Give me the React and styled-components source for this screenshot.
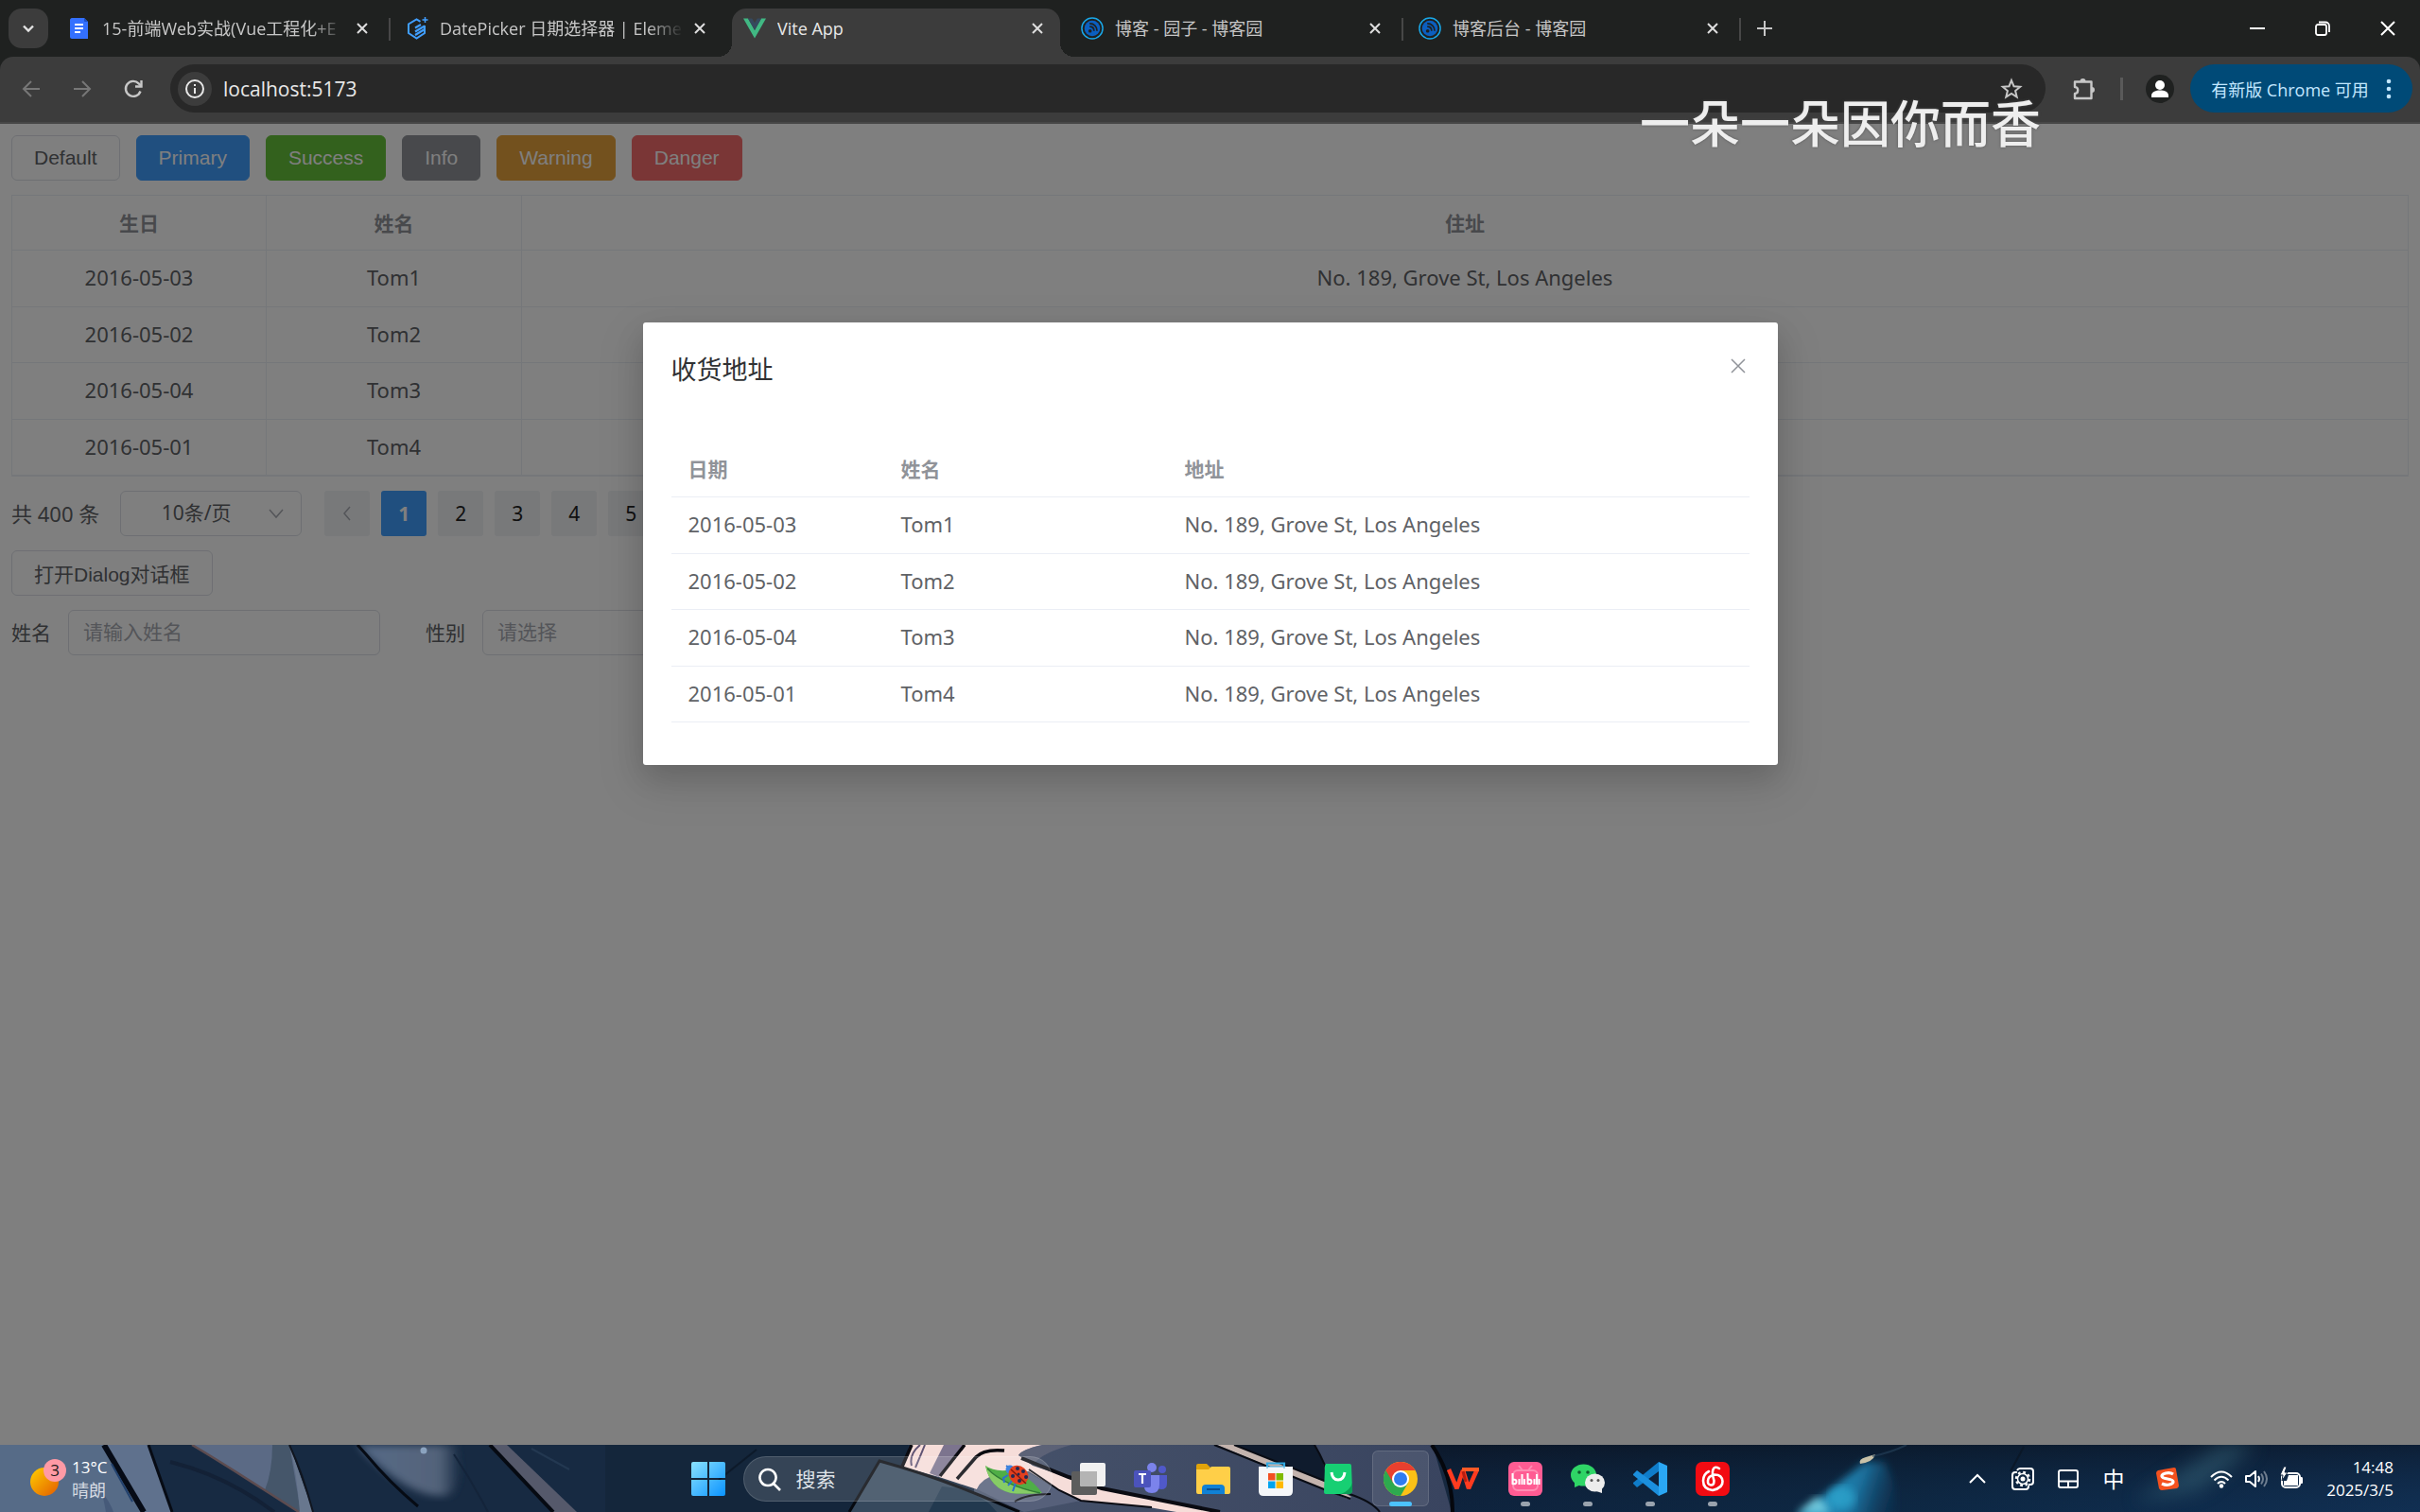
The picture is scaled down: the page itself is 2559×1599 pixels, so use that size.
import React from 'react';
import styled, { createGlobalStyle, css } from 'styled-components';

const uiFont = '"Open Sans", "Noto Sans CJK SC", sans-serif';
const pageFont = '"Noto Sans", "Noto Sans CJK SC", sans-serif';
const buttonFont = '"Liberation Sans", "Noto Sans CJK SC", sans-serif';

const GlobalStyle = createGlobalStyle`
  *, *::before, *::after { box-sizing: border-box; }
  html, body, #root { height: 100%; }
  body { margin: 0; overflow: hidden; background: #1f2120; font-family: ${uiFont}; }
  button, input, select { margin: 0; font: inherit; }
  button { cursor: pointer; }
  svg { display: block; flex: none; }
`;

const Screen = styled.div`
  position: relative;
  display: flex;
  flex-direction: column;
  min-height: 100vh;
`;

/* ---------- browser chrome ---------- */

const TabStrip = styled.header`
  display: flex;
  height: 60px;
  padding-left: 9px;
  background: #1f2120;
  color: #c7c7c7;
`;

const PlainButton = styled.button`
  display: flex;
  align-items: center;
  justify-content: center;
  padding: 0;
  border: 0;
  background: transparent;
  color: inherit;
`;

const TabSearch = styled(PlainButton)`
  width: 42px;
  height: 42px;
  margin: 9px 5px 0 0;
  border-radius: 14px;
  background: #3c3c3c;
  color: #e3e3e3;
`;

const TabList = styled.nav`
  display: flex;
  flex: 0 1 1785px;
  min-width: 0;
`;

const Tab = styled.div`
  position: relative;
  display: flex;
  align-items: center;
  flex: 1 1 0;
  min-width: 0;
  height: 60px;
  padding: 0 16px;
  border-right: 2px solid transparent;
  ${(p) => p.$divided && css`
    border-image: linear-gradient(transparent 19px, #474747 19px, #474747 43px, transparent 43px) 1;
  `}
  ${(p) => p.$active && css`
    z-index: 1;
    color: #e8e8e8;
    &::before {
      content: '';
      position: absolute;
      z-index: -1;
      inset: 9px 4px 0;
      border-radius: 15px 15px 0 0;
      background: #3c3c3c;
    }
    &::after {
      content: '';
      position: absolute;
      z-index: -1;
      inset: 45px -11px 0;
      background:
        radial-gradient(circle at 0 0, transparent 15px, #3c3c3c 15px) left / 15px 15px no-repeat,
        radial-gradient(circle at 100% 0, transparent 15px, #3c3c3c 15px) right / 15px 15px no-repeat;
    }
  `}
`;

const TabTitle = styled.a`
  flex: 1;
  min-width: 0;
  margin: 0 1px 0 12px;
  overflow: hidden;
  color: inherit;
  font-size: 18px;
  line-height: 26px;
  text-decoration: none;
  white-space: nowrap;
  ${(p) => p.$fade && css`
    mask-image: linear-gradient(90deg, #000 calc(100% - 42px), transparent calc(100% - 4px));
  `}
`;

const TabClose = styled(PlainButton)`
  width: 24px;
  height: 24px;
  color: #dedede;
`;

const NewTab = styled(PlainButton)`
  width: 50px;
  height: 60px;
`;

const WindowControls = styled.div`
  display: flex;
  margin-left: auto;
  color: #fff;
`;

const WindowButton = styled(PlainButton)`
  width: 69px;
  height: 60px;
`;

const ToolbarBack = styled.div`
  background: #1f2120;
`;

const Toolbar = styled.div`
  display: flex;
  align-items: center;
  height: 71px;
  padding: 0 8px 2px 6px;
  border-bottom: 2px solid #474747;
  border-radius: 14px 14px 0 0;
  background: #3c3c3c;
  color: #c7c7c7;
`;

const ToolButton = styled(PlainButton)`
  width: 54px;
  height: 48px;
  color: ${(p) => (p.disabled ? '#777' : '#c7c7c7')};
`;

const Omnibox = styled.form`
  display: flex;
  align-items: center;
  flex: 1;
  height: 51px;
  margin: 0 13px 0 12px;
  padding: 0 24px 0 8px;
  border-radius: 26px;
  background: #282828;
`;

const SiteInfo = styled(PlainButton)`
  width: 36px;
  height: 36px;
  border-radius: 50%;
  background: #3c3c3c;
  color: #e8e8e8;
`;

const AddressInput = styled.input`
  flex: 1;
  min-width: 0;
  padding: 0 12px;
  border: 0;
  outline: 0;
  background: transparent;
  color: #e8e8e8;
  font-size: 21px;
`;

const BarDivider = styled.span`
  width: 3px;
  height: 24px;
  margin: 0 12px;
  background: #5a5a5a;
`;

const UpdateButton = styled(PlainButton)`
  gap: 18px;
  width: 235px;
  height: 51px;
  margin-left: 5px;
  border-radius: 26px;
  background: #004a77;
  color: #c2e7ff;
  font-size: 18px;
`;

/* ---------- page ---------- */

const Viewport = styled.main`
  position: relative;
  flex: 1;
  padding: 12px;
  background: #fff;
  color: #606266;
  font-family: ${pageFont};
`;

const ButtonRow = styled.div`
  display: flex;
  gap: 17px;
  margin-bottom: 15px;
`;

const tones = {
  plain: ['#fff', '#606266', '#dcdfe6'],
  primary: ['#409eff', '#fff', '#409eff'],
  success: ['#67c23a', '#fff', '#67c23a'],
  info: ['#909399', '#fff', '#909399'],
  warning: ['#e6a23c', '#fff', '#e6a23c'],
  danger: ['#f56c6c', '#fff', '#f56c6c'],
};

const Button = styled.button`
  height: 48px;
  padding: 0 23px;
  border: 1px solid ${(p) => tones[p.$tone][2]};
  border-radius: 6px;
  background: ${(p) => tones[p.$tone][0]};
  color: ${(p) => tones[p.$tone][1]};
  font-family: ${buttonFont};
  font-size: 21px;
`;

const DataTable = styled.table`
  width: 100%;
  table-layout: fixed;
  border-collapse: separate;
  border-spacing: 0;
  font-size: 22px;
  line-height: 34px;
  text-align: ${(p) => (p.$bordered ? 'center' : 'left')};

  th, td {
    height: 60px;
    padding: 0 18px;
    border-bottom: 1px solid #ebeef5;
  }
  td { padding-bottom: 3px; }
  th {
    color: #909399;
    font-size: 21px;
    font-weight: 700;
  }
  tbody tr:nth-child(even) td { height: 59px; }

  ${(p) => p.$bordered && css`
    border: 1px solid #ebeef5;
    th + th, td + td { border-left: 1px solid #ebeef5; }
    th { height: 58px; }
  `}
`;

const Col = styled.col`
  width: ${(p) => p.$width}px;
`;

const Pager = styled.div`
  display: flex;
  align-items: center;
  gap: 12px;
  margin: 15px 0;
  font-size: 21px;
`;

const PagerTotal = styled.span`
  margin-right: 10px;
  padding-bottom: 2px;
  font-size: 22px;
`;

const SelectWrap = styled.span`
  position: relative;
  display: flex;
  align-items: center;
  width: ${(p) => p.$width}px;
  color: #a8abb2;
`;

const SelectArrow = styled.span`
  position: absolute;
  right: 18px;
  pointer-events: none;
`;

const fieldBox = css`
  width: 100%;
  height: 48px;
  border: 1px solid #dcdfe6;
  border-radius: 6px;
  background: #fff;
  font-size: 21px;
`;

const Select = styled.select`
  ${fieldBox}
  appearance: none;
  padding: 0 46px 2px 15px;
  color: ${(p) => (p.$centered ? '#606266' : '#a8abb2')};
  text-align-last: ${(p) => (p.$centered ? 'center' : 'left')};
`;

const TextInput = styled.input`
  ${fieldBox}
  width: 330px;
  padding: 0 15px 2px;
  color: #606266;
  &::placeholder { color: #a8abb2; opacity: 1; }
`;

const PageButton = styled.button`
  display: flex;
  align-items: center;
  justify-content: center;
  width: 48px;
  height: 48px;
  padding: 0;
  border: 0;
  border-radius: 3px;
  background: ${(p) => (p.$current ? '#409eff' : '#f0f2f5')};
  color: ${(p) => (p.$current ? '#fff' : p.disabled ? '#a8abb2' : '#222')};
  font-weight: ${(p) => (p.$current ? 700 : 400)};
`;

const PagerPrev = styled(PageButton)`
  margin-left: 12px;
`;

const FilterForm = styled.form`
  display: flex;
  gap: 48px;
  margin-top: 15px;
  font-size: 21px;
`;

const Field = styled.div`
  display: flex;
  align-items: center;
  gap: 18px;
  label { padding-bottom: 2px; }
`;

const Overlay = styled.div`
  position: absolute;
  inset: 0;
  padding-top: 210px;
  background: rgba(0, 0, 0, 0.5);
`;

const Dialog = styled.section`
  width: 1200px;
  max-width: 100%;
  margin: 0 auto;
  border-radius: 3px;
  background: #fff;
  box-shadow: 0 18px 48px 6px rgba(0, 0, 0, 0.1), 0 12px 30px rgba(0, 0, 0, 0.12);
`;

const DialogHeader = styled.div`
  display: flex;
  align-items: flex-start;
  justify-content: space-between;
  padding: 30px 30px 10px;
`;

const DialogTitle = styled.h2`
  margin: 0;
  color: #303133;
  font-size: 27px;
  font-weight: 400;
  line-height: 40px;
`;

const DialogClose = styled(PlainButton)`
  width: 24px;
  height: 32px;
  color: #909399;
`;

const DialogBody = styled.div`
  padding: 45px 30px;
`;

/* ---------- lyric caption over the desktop ---------- */

const Lyric = styled.div`
  position: absolute;
  z-index: 5;
  top: 90px;
  right: 401px;
  color: #eee;
  font-family: "Noto Sans CJK SC", sans-serif;
  font-size: 53px;
  font-weight: 500;
  line-height: 76px;
  text-shadow: 0 0 3px #555;
  white-space: nowrap;
`;

/* ---------- taskbar ---------- */

const Taskbar = styled.footer`
  position: relative;
  display: grid;
  grid-template-columns: 1fr auto 1fr;
  align-items: center;
  height: 71px;
  overflow: hidden;
  background: #16283f;
  color: #fff;
  font-size: 18px;
  line-height: 24px;
`;

const Wallpaper = styled.svg`
  position: absolute;
  inset: 0;
  width: 100%;
  height: 100%;
`;

const Weather = styled.div`
  position: relative;
  display: flex;
  align-items: center;
  gap: 6px;
  padding-left: 30px;
`;

const WeatherText = styled.div`
  font-size: 17px;
  span { display: block; }
  span + span { color: #d5dae2; font-size: 18px; }
`;

const Apps = styled.div`
  position: relative;
  display: flex;
  align-items: center;
`;

const AppSlot = styled(PlainButton)`
  position: relative;
  width: 66px;
  height: 71px;
  ${(p) => p.$focused && css`
    &::before {
      content: '';
      position: absolute;
      inset: 6px 3px;
      border: 1px solid rgba(255, 255, 255, 0.12);
      border-radius: 6px;
      background: rgba(255, 255, 255, 0.09);
    }
  `}
  ${(p) => p.$running && css`
    &::after {
      content: '';
      position: absolute;
      bottom: 6px;
      width: ${p.$focused ? 24 : 10}px;
      height: 5px;
      border-radius: 3px;
      background: ${p.$focused ? '#4cc2ff' : '#9aa3ae'};
    }
  `}
  svg { position: relative; }
`;

const SearchBox = styled.label`
  display: flex;
  align-items: center;
  width: 327px;
  height: 48px;
  margin: 0 5px 0 4px;
  padding: 0 10px 0 14px;
  border: 1px solid rgba(255, 255, 255, 0.14);
  border-radius: 24px;
  background: rgba(255, 255, 255, 0.14);
`;

const SearchInput = styled.input`
  flex: 1;
  min-width: 0;
  padding: 0 0 0 15px;
  border: 0;
  outline: 0;
  background: transparent;
  color: #fff;
  font-size: 21px;
  &::placeholder { color: #dfe3e8; opacity: 1; }
`;

const Tray = styled.div`
  position: relative;
  display: flex;
  align-items: center;
  justify-content: flex-end;
  padding-right: 28px;
`;

const TrayButton = styled(PlainButton)`
  width: ${(p) => p.$width || 48}px;
  height: 48px;
  font-size: 23px;
`;

const Clock = styled.div`
  width: 78px;
  margin-left: 6px;
  font-size: 17px;
  text-align: right;
  white-space: nowrap;
  time { display: block; }
`;

/* ---------- drawings ---------- */

const Stroke = ({ size = 24, w = 2, d, box = 24, ...rest }) => (
  <svg width={size} height={size} viewBox={`0 0 ${box} ${box}`} fill="none" stroke="currentColor" strokeWidth={w} aria-hidden="true" {...rest}>
    <path d={d} />
  </svg>
);

const DocIcon = () => (
  <svg width="24" height="24" viewBox="0 0 24 24" aria-hidden="true">
    <path d="M4 1h13l4 4v18H4a2 2 0 0 1-2-2V3c0-1 1-2 2-2z" fill="#3370ff" />
    <path d="M17 1l4 4h-3a1 1 0 0 1-1-1z" fill="#1d4fc4" />
    <path d="M7 8h9M7 12h9M7 16h6" stroke="#fff" strokeWidth="2" />
  </svg>
);

const ElementIcon = () => (
  <svg width="24" height="24" viewBox="0 0 24 24" fill="none" stroke="#409eff" strokeWidth="2" aria-hidden="true">
    <path d="M15.500 4.800L11.500 2.500 3 7.500v9.500l8.500 5.500 8.500-5.500V9" />
    <path d="M20 9.500l-10 6M20 13l-10 6M16 8l-6 3.500" strokeWidth="2.200" />
    <path d="M20.500 0v6M17.500 3h6" strokeWidth="1.500" />
  </svg>
);

const VueIcon = () => (
  <svg width="24" height="24" viewBox="0 0 24 24" aria-hidden="true">
    <path d="M0 1.500h5L12 14l7-12.500h5L12 22.500z" fill="#41b883" />
    <path d="M5 1.500h4.300L12 6.200l2.700-4.700H19L12 14z" fill="#35495e" />
  </svg>
);

const CnblogsIcon = () => (
  <svg width="24" height="24" viewBox="0 0 26 26" fill="none" aria-hidden="true">
    <circle cx="13" cy="13" r="12" stroke="#19a7e8" strokeWidth="1.600" />
    <circle cx="13" cy="13" r="9" fill="#0b5fc0" />
    <path d="M10 7.500c5 0 8.500 3.500 8.500 8.500M10 11c3 0 5 2 5 5" stroke="#1f2120" strokeWidth="1.800" />
    <circle cx="10.500" cy="16" r="2" fill="#1f2120" />
  </svg>
);

const crossPath = 'M7 7l10 10M17 7L7 17';

const Restore = () => (
  <svg width="18" height="18" viewBox="0 0 18 18" fill="none" stroke="currentColor" strokeWidth="1.800" aria-hidden="true">
    <rect x="2" y="5" width="11" height="11" rx="2" />
    <path d="M5 2.500h7a4 4 0 0 1 4 4V13" />
  </svg>
);

const Reload = () => (
  <svg width="24" height="24" viewBox="0 0 24 24" fill="none" stroke="currentColor" strokeWidth="2.400" aria-hidden="true">
    <path d="M19.500 14.500A8 8 0 1 1 17.700 6.300L20 8.500" />
    <path d="M20.500 3v6.500H14" />
  </svg>
);

const InfoIcon = () => (
  <svg width="22" height="22" viewBox="0 0 22 22" fill="none" stroke="currentColor" strokeWidth="2" aria-hidden="true">
    <circle cx="11" cy="11" r="9" />
    <path d="M11 10v6M11 6v2" />
  </svg>
);

const Star = () => (
  <svg width="24" height="24" viewBox="0 0 24 24" fill="none" stroke="currentColor" strokeWidth="2" aria-hidden="true">
    <path d="M12 3l2.500 6.200 6.700.5-5.100 4.300 1.600 6.500L12 17l-5.700 3.500 1.600-6.500-5.100-4.300 6.700-.5z" />
  </svg>
);

const Puzzle = () => (
  <svg width="28" height="28" viewBox="0 0 28 28" fill="none" aria-hidden="true">
    <path d="M5 6.500h17.500V24H5v-5c4 0 4.500-7 0-7z" stroke="currentColor" strokeWidth="2.400" strokeLinejoin="round" />
    <path d="M10.500 6a3 3 0 0 1 6 0zM23 12a3 3 0 0 1 0 6z" fill="currentColor" />
  </svg>
);

const Avatar = () => (
  <svg width="30" height="30" viewBox="0 0 30 30" aria-hidden="true">
    <circle cx="15" cy="15" r="15" fill="#1f2120" />
    <circle cx="15" cy="11" r="5" fill="#fff" />
    <path d="M6 24v-2c0-4 5-5.500 9-5.500s9 1.500 9 5.500v2z" fill="#fff" />
  </svg>
);

const Dots = () => (
  <svg width="6" height="24" viewBox="0 0 6 24" fill="currentColor" aria-hidden="true">
    <circle cx="3" cy="4" r="2.300" /><circle cx="3" cy="12" r="2.300" /><circle cx="3" cy="20" r="2.300" />
  </svg>
);

const WallpaperArt = () => (
  <Wallpaper viewBox="0 0 2559 71" preserveAspectRatio="none" aria-hidden="true">
    <defs>
      <linearGradient id="night" x1="0" y1="0" x2="1" y2="0">
        <stop offset="0" stopColor="#0d1b30" /><stop offset=".45" stopColor="#0b2138" /><stop offset="1" stopColor="#102c4e" />
      </linearGradient>
      <linearGradient id="dim" x1="0" y1="0" x2="0" y2="1">
        <stop offset="0" stopColor="#0b1626" stopOpacity=".6" /><stop offset="1" stopColor="#12365c" stopOpacity=".3" />
      </linearGradient>
      <linearGradient id="sheen" x1="0" y1="0" x2="1" y2="0">
        <stop offset="0" stopColor="#566a87" /><stop offset=".8" stopColor="#53637a" /><stop offset="1" stopColor="#1d3048" />
      </linearGradient>
      <linearGradient id="coat" x1="0" y1="0" x2="1" y2="0">
        <stop offset="0" stopColor="#46526a" /><stop offset="1" stopColor="#39445f" />
      </linearGradient>
      <linearGradient id="beam" gradientUnits="userSpaceOnUse" x1="1920" y1="45" x2="2010" y2="75">
        <stop offset="0" stopColor="#2ba0cc" /><stop offset=".45" stopColor="#1f86b8" stopOpacity=".8" /><stop offset="1" stopColor="#0f3a60" stopOpacity="0" />
      </linearGradient>
      <filter id="soft"><feGaussianBlur stdDeviation="4" /></filter>
      <filter id="softer" x="-50%" y="-50%" width="200%" height="200%"><feGaussianBlur stdDeviation="10" /></filter>
    </defs>
    <path d="M0 0H1000V71H0z" fill="#172a42" />
    <path d="M0 0H110L150 71H0z" fill="#566b87" />
    <path d="M108 50q8 10 12 21h-8z" fill="#465a79" />
    <path d="M112 0H157L182 71H153z" fill="#5f718d" />
    <path d="M110 0L152 71" stroke="#060b16" strokeWidth="6" />
    <path d="M118 20l22 40" stroke="#21406c" strokeWidth="2" />
    <path d="M157 0L182 71" stroke="#070b14" strokeWidth="3" />
    <path d="M203 0H306L331 71H316L280 48z" fill="#5b6a85" />
    <path d="M288 0h18l12 71-38-23q8-20 8-48z" fill="#45566a" />
    <path d="M306 0l25 71h-14Q314 30 306 0z" fill="#68778e" />
    <path d="M203 0Q230 16 280 48L316 71" stroke="#5d4c50" strokeWidth="2.500" fill="none" />
    <path d="M306 0q14 30 25 71" stroke="#10151f" strokeWidth="2" fill="none" />
    <path d="M180 18q60 15 110 53" stroke="#132136" strokeWidth="4" fill="none" />
    <path d="M378 0H482Q492 50 470 54Q430 56 378 0z" fill="url(#sheen)" filter="url(#soft)" />
    <path d="M378 0l9 10Q412 40 442 65" stroke="#060b14" strokeWidth="3" fill="none" />
    <circle cx="448" cy="6" r="3.500" fill="#8ba3bf" />
    <path d="M480 10q20 30 36 61" stroke="#14243a" strokeWidth="2" fill="none" />
    <path d="M520 0H536L610 71H585z" fill="#55596b" />
    <path d="M518 0L585 71" stroke="#060a12" strokeWidth="4" />
    <path d="M562 4l40 22" stroke="#233851" strokeWidth="2" />
    <path d="M640 0h320v71H640z" fill="#14263b" />
    <path d="M800 5l-40 32" stroke="#0d1a2a" strokeWidth="2" />
    <path d="M1030 0H1515L1535 71H1030z" fill="url(#coat)" />
    <path d="M964 0H1102Q1080 5 1077 11L1092 22 1128 34 1165 46 1240 62 1290 71H1244L1215 66 1143 59 1120 48 1088 28 1060 30Q1038 36 1033 47L993 34 953 23z" fill="#f6ddd9" />
    <path d="M1102 0Q1080 5 1077 11l16 9q10-12 40-20z" fill="#6d6e80" opacity=".6" />
    <path d="M998 0h20l-25 34-10-4z" fill="#7c748e" />
    <path d="M973 0q-12 10-9 22M978 0q-4 10-10 24" stroke="#5f5373" strokeWidth="2" fill="none" />
    <path d="M964 0l-10 23M1020 0l-26 33" stroke="#0a0a10" strokeWidth="3.500" />
    <path d="M1012 36q14-16 20-23 8-9 30-7" stroke="#0a0a10" strokeWidth="3.500" fill="none" />
    <path d="M1033 47q5-12 20-15l32-4 35 20 23 11-60 12z" fill="#56607a" />
    <path d="M930 17Q985 32 1040 55L1078 71H898z" fill="#36495d" />
    <path d="M996 44q30 2 50 18l8 9h-72z" fill="#22394f" />
    <path d="M898 71L930 17Q985 32 1040 55L1078 71" stroke="#06090f" strokeWidth="3" fill="none" />
    <path d="M1088 26l32 22 23 11 75 7M1073 60q12-8 38-8" stroke="#0a0b12" strokeWidth="2" fill="none" />
    <path d="M1080 14l50 20 35 12 75 15 50 10" stroke="#0a0b12" strokeWidth="4" fill="none" />
    <path d="M1303 0H1390Q1402 18 1402 38L1370 26z" fill="#0f1b2d" />
    <path d="M1287 0h18l65 26 33 14 26 15-4 2-30-12z" fill="#c4b4ae" />
    <path d="M1284 0l116 47 28 10M1305 0l98 39M1390 0q12 20 17 40M1427 52q24 8 32 19" stroke="#090c14" strokeWidth="2" fill="none" />
    <path d="M1514 0H2559V71H1536Q1536 30 1514 0z" fill="url(#night)" />
    <path d="M1514 0H2559V71H1536Q1536 30 1514 0z" fill="url(#dim)" />
    <path d="M1514 0q22 32 22 71" stroke="#05070d" strokeWidth="4" fill="none" />
    <path d="M1895 80L1972 18h20q14 20 14 62z" fill="url(#beam)" filter="url(#soft)" />
    <ellipse cx="1948" cy="56" rx="14" ry="12" fill="#2fa8d0" opacity=".7" filter="url(#soft)" />
    <path d="M1900 72l22-18 14 18z" fill="#8fe0ea" opacity=".7" filter="url(#soft)" />
    <path d="M1967 20q-2-5 6-7l10-3q-2 8-16 10z" fill="#c9c2a8" />
    <path d="M1980 12q20-4 36-12" stroke="#27425c" strokeWidth="2" fill="none" opacity=".6" />
    <path d="M2140 2l-14 26" stroke="#0b1828" strokeWidth="2" />
    <path d="M2350 0h36l-60 48-70 12z" fill="#3a6a7e" opacity=".5" filter="url(#softer)" />
  </Wallpaper>
);

const Sun = () => (
  <svg width="40" height="42" viewBox="0 0 40 42" aria-hidden="true">
    <defs><linearGradient id="sun" x1="0" y1="0" x2="1" y2="1"><stop offset="0" stopColor="#ffd000" /><stop offset="1" stopColor="#e35b00" /></linearGradient></defs>
    <circle cx="17" cy="24" r="15" fill="url(#sun)" />
    <circle cx="28" cy="12" r="12" fill="#ff9aa5" />
    <text x="28" y="18" textAnchor="middle" fontSize="17" fill="#1a1a1a" fontFamily="Open Sans, sans-serif">3</text>
  </svg>
);

const WindowsLogo = () => (
  <svg width="36" height="36" viewBox="0 0 36 36" aria-hidden="true">
    <defs><linearGradient id="win" gradientUnits="userSpaceOnUse" x1="0" y1="0" x2="36" y2="36"><stop offset="0" stopColor="#8ae2ff" /><stop offset="1" stopColor="#0a93ff" /></linearGradient></defs>
    <path d="M2 0h15v17H0V2q0-2 2-2zM19 0h15q2 0 2 2v15H19zM0 19h17v17H2q-2 0-2-2zM19 19h17v15q0 2-2 2H19z" fill="url(#win)" />
  </svg>
);

const Ladybug = () => (
  <svg width="60" height="36" viewBox="0 0 60 36" aria-hidden="true">
    <path d="M0 4q8 6 22 5 22 2 38 24-22 1-33 0Q5 28 0 4z" fill="#4fae46" />
    <path d="M0 4q14 18 60 29-22 1-33 0Q5 28 0 4z" fill="#86cc66" />
    <path d="M2 7q16 17 56 26" stroke="#2f7d35" strokeWidth="1.500" fill="none" />
    <path d="M24 14l-5 3 1 5M28 20l-4 5M32 22l-3 9M27 7l-5-3" stroke="#2b6fd0" strokeWidth="2" fill="none" />
    <circle cx="26" cy="8" r="4.500" fill="#3d84e0" />
    <ellipse cx="35" cy="14" rx="11" ry="9.500" fill="#e2401f" transform="rotate(40 35 14)" />
    <path d="M27 8l16 15" stroke="#86180c" strokeWidth="1.500" />
    <g fill="#1f2a55"><circle cx="29" cy="15" r="2" /><circle cx="36" cy="20" r="2" /><circle cx="34" cy="7" r="2" /><circle cx="40" cy="10" r="2" /><circle cx="43" cy="16" r="2" /><circle cx="35" cy="13" r="1.500" /></g>
  </svg>
);

const TaskView = () => (
  <svg width="36" height="36" viewBox="0 0 36 36" aria-hidden="true">
    <rect x="0" y="10" width="27" height="25" rx="2" fill="#5d5d5d" />
    <rect x="9" y="1" width="27" height="25" rx="2" fill="#f1f1f1" />
    <path d="M9 10h18v16H11q-2 0-2-2z" fill="#b4b4b4" />
  </svg>
);

const Teams = () => (
  <svg width="36" height="36" viewBox="0 0 36 36" aria-hidden="true">
    <circle cx="19" cy="6" r="5" fill="#7b83eb" /><circle cx="30" cy="8" r="4" fill="#5059c9" />
    <path d="M24 14h11v9q0 6-6 6-4 0-5-3z" fill="#5059c9" />
    <path d="M11 14h16v10q0 9-8 9T11 26z" fill="#7b83eb" />
    <rect x="0" y="9" width="18" height="18" rx="2" fill="#4b53bc" />
    <path d="M5 13h8M9 13v10" stroke="#fff" strokeWidth="2.200" />
  </svg>
);

const Folder = () => (
  <svg width="36" height="36" viewBox="0 0 36 36" aria-hidden="true">
    <path d="M0 4q0-2 2-2h9l4 4v4H0z" fill="#e0a30a" />
    <path d="M0 8h13l3-3h18q2 0 2 2v25q0 2-2 2H2q-2 0-2-2z" fill="#ffcf48" />
    <path d="M6 34v-6q0-4 4-4h16q4 0 4 4v6z" fill="#1081d6" />
    <path d="M11 29h14" stroke="#0a4f8f" strokeWidth="2" />
  </svg>
);

const Store = () => (
  <svg width="36" height="36" viewBox="0 0 36 36" aria-hidden="true">
    <path d="M9 8V1.500h18V8" fill="none" stroke="#31a8e0" strokeWidth="2.200" />
    <path d="M0 5h36v26q0 5-5 5H5q-5 0-5-5z" fill="#f5f7f9" />
    <path d="M9 7V5h18v2" fill="none" stroke="#31a8e0" strokeWidth="1.600" opacity=".6" />
    <path d="M10 12h7.500v7.500H10z" fill="#f25022" /><path d="M18.500 12H26v7.500h-7.500z" fill="#7fba00" />
    <path d="M10 20.500h7.500V28H10z" fill="#00a4ef" /><path d="M18.500 20.500H26V28h-7.500z" fill="#ffb900" />
  </svg>
);

const GreenBag = () => (
  <svg width="36" height="36" viewBox="0 0 36 36" aria-hidden="true">
    <path d="M5 2h25q2 0 2 2l1 26q0 4-4 4H5q-2 0-2-2L4 4z" fill="#17cf73" />
    <path d="M33 22q-2 8-12 12h8q4 0 4-4z" fill="#0a9d55" />
    <path d="M11 11q1 8 7 8t7-8" fill="none" stroke="#fff" strokeWidth="3" />
  </svg>
);

const Chrome = () => (
  <svg width="36" height="36" viewBox="0 0 36 36" aria-hidden="true">
    <circle cx="18" cy="18" r="18" fill="#fbc116" />
    <path d="M18 18L2.400 9A18 18 0 0 0 18 36l7.800-13.500z" fill="#2da94f" />
    <path d="M2.400 9A18 18 0 0 1 33.600 9H18l-8 13z" fill="#e8402f" />
    <circle cx="18" cy="18" r="9" fill="#fff" /><circle cx="18" cy="18" r="7" fill="#2f7cf0" />
  </svg>
);

const Wps = () => (
  <svg width="36" height="36" viewBox="0 0 36 36" aria-hidden="true">
    <path d="M3 8l8.500 20L18 9l6 19L33 8" fill="none" stroke="#ff3b1f" strokeWidth="4.500" strokeLinejoin="bevel" />
    <path d="M17 8h18" stroke="#ff5a26" strokeWidth="4" /><path d="M18 10l3 11" stroke="#b81d10" strokeWidth="3" />
  </svg>
);

const Bilibili = () => (
  <svg width="36" height="36" viewBox="0 0 36 36" aria-hidden="true">
    <rect width="36" height="36" rx="6" fill="#ff5c93" />
    <path d="M11 4l4 5M25 4l-4 5" stroke="#ff8db3" strokeWidth="2" /><rect x="5" y="9" width="26" height="21" rx="5" fill="none" stroke="#ff8db3" strokeWidth="2" />
    <g fill="none" stroke="#fff" strokeWidth="2"><path d="M4.500 12v11q4 1 4-2t-4-2M11.500 18v6M14.500 13v11M17 18v6M20.500 12v11q4 1 4-2t-4-2M27.500 18v6M30 13v11M32.500 18v6" /></g>
  </svg>
);

const WeChat = () => (
  <svg width="36" height="36" viewBox="0 0 36 36" aria-hidden="true">
    <ellipse cx="13.500" cy="14" rx="13.500" ry="11.500" fill="#2fd566" /><path d="M4 21v6l7-3z" fill="#2fd566" />
    <circle cx="9" cy="11" r="1.800" fill="#0e5c2d" /><circle cx="18" cy="11" r="1.800" fill="#0e5c2d" />
    <ellipse cx="25.500" cy="22" rx="10.500" ry="9.500" fill="#ececec" /><path d="M33 28v5l-6-2z" fill="#ececec" />
    <circle cx="22" cy="19.500" r="1.500" fill="#555" /><circle cx="29" cy="19.500" r="1.500" fill="#555" />
  </svg>
);

const VsCode = () => (
  <svg width="36" height="36" viewBox="0 0 36 36" aria-hidden="true">
    <path d="M27 0l9 4v28l-9 4z" fill="#2aa7f4" />
    <path d="M27 0v10L4 27l-4-4v-1z" fill="#0f7cc9" />
    <path d="M27 36V26L4 9l-4 4v1z" fill="#1b8fdd" />
  </svg>
);

const NetEase = () => (
  <svg width="36" height="36" viewBox="0 0 36 36" aria-hidden="true">
    <rect width="36" height="36" rx="7" fill="#f30b12" />
    <path d="M25 7q-5-3-6.500 1t1 12q0 5-3.500 4.500T13 20q0-5 7-6.500 8 0 8.500 7T18 30Q8 29 8 20q0-7 6-10" fill="none" stroke="#fff" strokeWidth="2.600" strokeLinecap="round" />
  </svg>
);

const TrayCopy = () => (
  <svg width="26" height="26" viewBox="0 0 26 26" fill="none" stroke="currentColor" strokeWidth="2" aria-hidden="true">
    <path d="M7 4q1-2 3-2h11q3 0 3 3v11q0 3-3 3h-2" /><path d="M19 20v1q0 3-3 3H5q-3 0-3-3V9q0-3 3-3h2" />
    <circle cx="13" cy="13" r="7" strokeDasharray="2.750 2.750" strokeWidth="2.500" /><circle cx="13" cy="13" r="5.500" strokeWidth="1.500" /><circle cx="13" cy="13" r="2.500" fill="currentColor" stroke="none" />
  </svg>
);

const Touchpad = () => <Stroke d="M4 3h16q2 0 2 2v14q0 2-2 2H4q-2 0-2-2V5q0-2 2-2zM2 14.500h20M12 14.500V21" />;

const Sogou = () => (
  <svg width="26" height="26" viewBox="0 0 26 26" aria-hidden="true">
    <path d="M3 4l17-3q2 0 2 2l3 17q0 2-2 3L7 25q-2 0-3-2L1 7q0-2 2-3z" fill="#f4511e" />
    <path d="M19 8q-3-2-8-1-4 1-4 3t6 3 6 3-4 3-8-1" fill="none" stroke="#fff" strokeWidth="3.200" />
  </svg>
);

const Wifi = () => (
  <svg width="26" height="24" viewBox="0 0 26 24" fill="none" stroke="currentColor" strokeWidth="2" aria-hidden="true">
    <path d="M2 10q11-11 22 0M5.500 13.500q7.500-7.500 15 0M9 17q4-4 8 0" /><circle cx="13" cy="19.500" r="2.200" fill="currentColor" stroke="none" />
  </svg>
);

const Volume = () => (
  <svg width="26" height="24" viewBox="0 0 26 24" fill="none" stroke="currentColor" strokeWidth="2" aria-hidden="true">
    <path d="M2 9h4l6-5v16l-6-5H2z" strokeLinejoin="round" /><path d="M15 9q2 3 0 6" />
    <path d="M18 6.500q4 5.500 0 11M21 4q6 8 0 16" opacity=".4" />
  </svg>
);

const Battery = () => (
  <svg width="26" height="26" viewBox="0 0 26 26" aria-hidden="true">
    <rect x="3" y="7" width="19" height="15" rx="4" fill="none" stroke="#fff" strokeWidth="2" />
    <path d="M10 9h10v11H5v-5h3z" fill="#fff" /><path d="M23 11h1q1 0 1 1.500v4q0 1.500-1 1.500h-1z" fill="#fff" />
    <path d="M5 0L1 9h3l-1 6 6-9H6l2-6z" fill="#fff" stroke="#10253e" strokeWidth="1" />
  </svg>
);

/* ---------- data ---------- */

const tabs = [
  { title: '15-前端Web实战(Vue工程化+E', Icon: DocIcon, divided: true, fade: true },
  { title: 'DatePicker 日期选择器 | Eleme', Icon: ElementIcon, fade: true },
  { title: 'Vite App', Icon: VueIcon, active: true },
  { title: '博客 - 园子 - 博客园', Icon: CnblogsIcon, divided: true },
  { title: '博客后台 - 博客园', Icon: CnblogsIcon, divided: true },
];

const people = [
  ['2016-05-03', 'Tom1', 'No. 189, Grove St, Los Angeles'],
  ['2016-05-02', 'Tom2', 'No. 189, Grove St, Los Angeles'],
  ['2016-05-04', 'Tom3', 'No. 189, Grove St, Los Angeles'],
  ['2016-05-01', 'Tom4', 'No. 189, Grove St, Los Angeles'],
];

const actions = [
  ['Default', 'plain'], ['Primary', 'primary'], ['Success', 'success'],
  ['Info', 'info'], ['Warning', 'warning'], ['Danger', 'danger'],
];

const apps = [
  ['Task view', TaskView], ['Teams', Teams], ['Explorer', Folder], ['Store', Store], ['App center', GreenBag],
  ['Chrome', Chrome, true, true], ['WPS', Wps], ['bilibili', Bilibili, true], ['WeChat', WeChat, true],
  ['VS Code', VsCode, true], ['NetEase Music', NetEase, true],
];

function PeopleTable({ heads, widths, bordered }) {
  return (
    <DataTable $bordered={bordered}>
      <colgroup>
        {widths.map((w, i) => <Col key={heads[i]} $width={w} />)}
        <col />
      </colgroup>
      <thead><tr>{heads.map((h) => <th key={h} scope="col">{h}</th>)}</tr></thead>
      <tbody>
        {people.map((row) => (
          <tr key={row[0]}>{row.map((cell) => <td key={cell}>{cell}</td>)}</tr>
        ))}
      </tbody>
    </DataTable>
  );
}

const Chevron = () => <Stroke size={18} box={18} w={1.5} d="M2 5l7 8 7-8" />;

export default function App() {
  return (
    <Screen>
      <GlobalStyle />
      <TabStrip>
        <TabSearch aria-label="Search tabs"><Stroke size={20} box={20} w={2.4} d="M5 7.500l5 5 5-5" /></TabSearch>
        <TabList>
          {tabs.map(({ title, Icon, active, divided, fade }) => (
            <Tab key={title} $active={active} $divided={divided}>
              <Icon />
              <TabTitle href="#" $fade={fade}>{title}</TabTitle>
              <TabClose aria-label="Close tab"><Stroke d={crossPath} /></TabClose>
            </Tab>
          ))}
        </TabList>
        <NewTab aria-label="New tab"><Stroke d="M12 4v16M4 12h16" /></NewTab>
        <WindowControls>
          <WindowButton aria-label="Minimize"><Stroke d="M4 12h16" /></WindowButton>
          <WindowButton aria-label="Restore"><Restore /></WindowButton>
          <WindowButton aria-label="Close"><Stroke d="M5 5l14 14M19 5L5 19" /></WindowButton>
        </WindowControls>
      </TabStrip>

      <ToolbarBack>
        <Toolbar>
          <ToolButton disabled aria-label="Back"><Stroke d="M21 12H4M12 4l-8 8 8 8" /></ToolButton>
          <ToolButton disabled aria-label="Forward"><Stroke d="M3 12h17M12 4l8 8-8 8" /></ToolButton>
          <ToolButton aria-label="Reload"><Reload /></ToolButton>
          <Omnibox>
            <SiteInfo type="button" aria-label="Site information"><InfoIcon /></SiteInfo>
            <AddressInput aria-label="Address" defaultValue="localhost:5173" />
            <PlainButton type="button" aria-label="Bookmark"><Star /></PlainButton>
          </Omnibox>
          <ToolButton aria-label="Extensions"><Puzzle /></ToolButton>
          <BarDivider />
          <ToolButton aria-label="Profile"><Avatar /></ToolButton>
          <UpdateButton>有新版 Chrome 可用<Dots /></UpdateButton>
        </Toolbar>
      </ToolbarBack>

      <Viewport>
        <ButtonRow>
          {actions.map(([label, tone]) => <Button key={label} $tone={tone}>{label}</Button>)}
        </ButtonRow>
        <PeopleTable bordered heads={['生日', '姓名', '住址']} widths={[268, 270]} />
        <Pager>
          <PagerTotal>共 400 条</PagerTotal>
          <SelectWrap $width={192}>
            <Select $centered aria-label="每页条数"><option>10条/页</option></Select>
            <SelectArrow><Chevron /></SelectArrow>
          </SelectWrap>
          <PagerPrev disabled aria-label="上一页"><Stroke size={18} box={18} w={1.5} d="M12 2L6 9l6 7" /></PagerPrev>
          {[1, 2, 3, 4, 5].map((n) => <PageButton key={n} $current={n === 1}>{n}</PageButton>)}
        </Pager>
        <ButtonRow>
          <Button $tone="plain">打开Dialog对话框</Button>
        </ButtonRow>
        <FilterForm>
          <Field>
            <label htmlFor="person-name">姓名</label>
            <TextInput id="person-name" placeholder="请输入姓名" />
          </Field>
          <Field>
            <label htmlFor="gender">性别</label>
            <SelectWrap $width={330}>
              <Select id="gender"><option>请选择</option></Select>
            </SelectWrap>
          </Field>
        </FilterForm>

        <Overlay>
          <Dialog role="dialog" aria-modal="true" aria-labelledby="dialog-title">
            <DialogHeader>
              <DialogTitle id="dialog-title">收货地址</DialogTitle>
              <DialogClose aria-label="关闭"><Stroke w={1.5} d="M5 5l14 14M19 5L5 19" /></DialogClose>
            </DialogHeader>
            <DialogBody>
              <PeopleTable heads={['日期', '姓名', '地址']} widths={[225, 300]} />
            </DialogBody>
          </Dialog>
        </Overlay>
      </Viewport>

      <Lyric>一朵一朵因你而香</Lyric>

      <Taskbar>
        <WallpaperArt />
        <Weather>
          <Sun />
          <WeatherText><span>13°C</span><span>晴朗</span></WeatherText>
        </Weather>
        <Apps>
          <AppSlot aria-label="Start"><WindowsLogo /></AppSlot>
          <SearchBox>
            <Stroke size={26} box={26} w={2.6} d="M11 3a8.500 8.500 0 1 0 .01 0zM17 18l7 7" />
            <SearchInput aria-label="搜索" placeholder="搜索" />
            <Ladybug />
          </SearchBox>
          {apps.map(([name, Icon, running, focused]) => (
            <AppSlot key={name} aria-label={name} $running={running} $focused={focused}><Icon /></AppSlot>
          ))}
        </Apps>
        <Tray>
          <TrayButton aria-label="Hidden icons"><Stroke size={20} box={20} d="M2 14l8-8 8 8" /></TrayButton>
          <TrayButton aria-label="Clipboard"><TrayCopy /></TrayButton>
          <TrayButton aria-label="Touchpad"><Touchpad /></TrayButton>
          <TrayButton>中</TrayButton>
          <TrayButton $width={66} aria-label="Sogou"><Sogou /></TrayButton>
          <TrayButton $width={48} aria-label="Network"><Wifi /></TrayButton>
          <TrayButton $width={26} aria-label="Volume"><Volume /></TrayButton>
          <TrayButton $width={48} aria-label="Battery"><Battery /></TrayButton>
          <Clock><time>14:48</time><time>2025/3/5</time></Clock>
        </Tray>
      </Taskbar>
    </Screen>
  );
}
